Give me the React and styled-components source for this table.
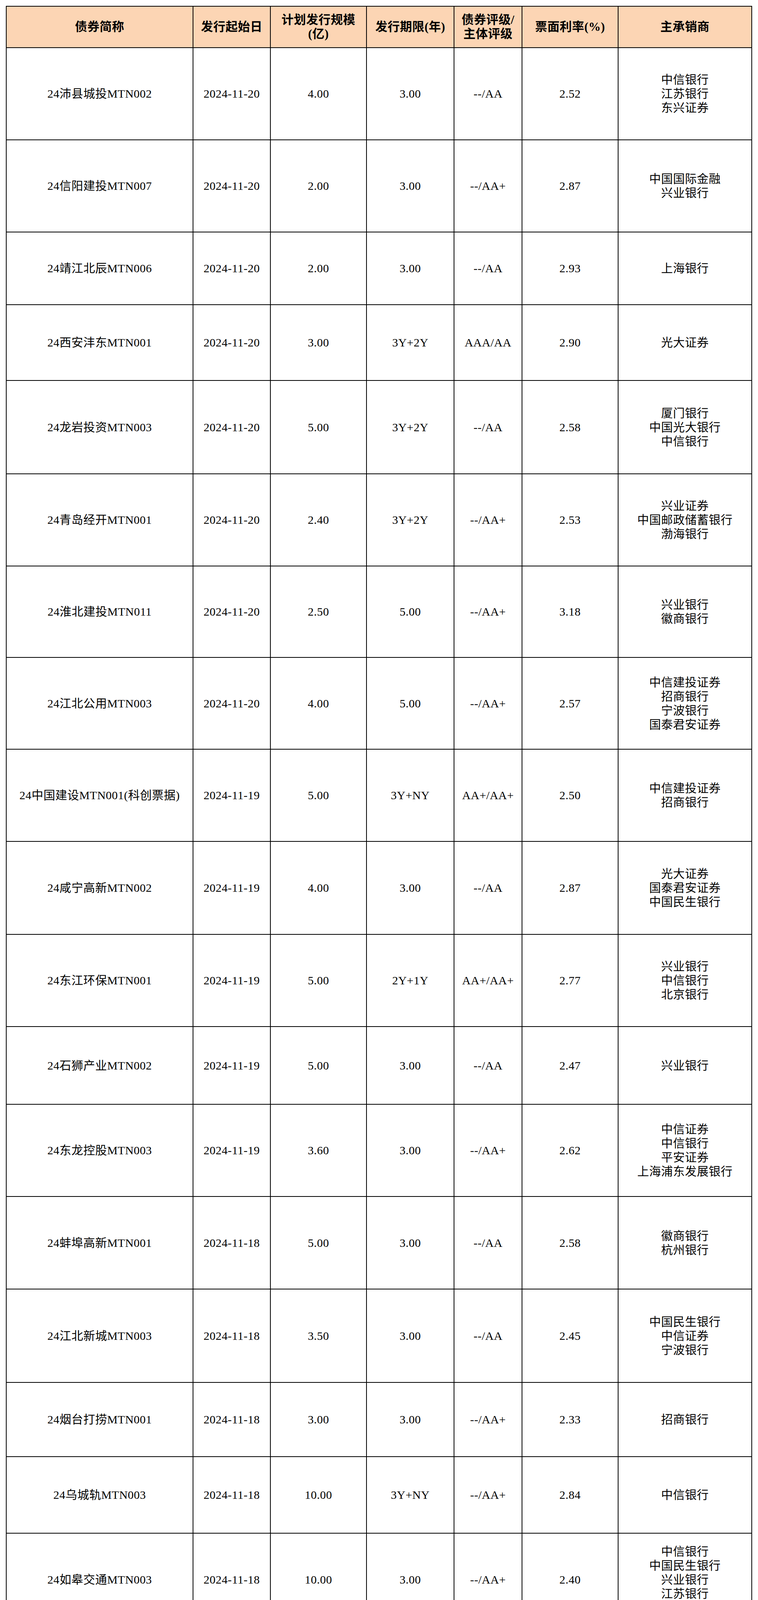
import styled, { createGlobalStyle } from "styled-components";

const GlobalStyle = createGlobalStyle`
  html, body {
    margin: 0;
    padding: 0;
    background: #fff;
  }
  body {
    font-family: "Liberation Serif", "Noto Sans CJK SC", serif;
    color: #000;
  }
`;

// widths of the cells between the 2px rules
const COLS = "476px 196px 244px 222px 172px 244px 340px";

const Page = styled.div`
  padding: 15px 0 0 15px;
`;

const Table = styled.div`
  display: flex;
  flex-direction: column;
  gap: 2px;
  width: fit-content;
  padding: 2px 2px 0 2px;
  background: #000;
`;

const Row = styled.div`
  display: grid;
  grid-template-columns: ${COLS};
  gap: 2px;
  height: ${(p) => p.$h}px;
`;

const Cell = styled.div`
  display: flex;
  flex-direction: column;
  align-items: center;
  justify-content: center;
  text-align: center;
  background: ${(p) => (p.$head ? "#fcd5b4" : "#fff")};
  font-size: ${(p) => (p.$head ? 31 : 30)}px;
  font-weight: ${(p) => (p.$head ? 600 : 400)};
  letter-spacing: 0.5px;
  line-height: 36px;
  white-space: nowrap;
`;

const Line = styled.span`
  display: block;
`;

const head = [
  ["债券简称"],
  ["发行起始日"],
  ["计划发行规模", "(亿)"],
  ["发行期限(年)"],
  ["债券评级/", "主体评级"],
  ["票面利率(%)"],
  ["主承销商"],
];

const rows = [
  { h: 234, name: "24沛县城投MTN002", date: "2024-11-20", size: "4.00", term: "3.00", rate: "--/AA", coupon: "2.52", banks: ["中信银行", "江苏银行", "东兴证券"] },
  { h: 234, name: "24信阳建投MTN007", date: "2024-11-20", size: "2.00", term: "3.00", rate: "--/AA+", coupon: "2.87", banks: ["中国国际金融", "兴业银行"] },
  { h: 184, name: "24靖江北辰MTN006", date: "2024-11-20", size: "2.00", term: "3.00", rate: "--/AA", coupon: "2.93", banks: ["上海银行"] },
  { h: 192, name: "24西安沣东MTN001", date: "2024-11-20", size: "3.00", term: "3Y+2Y", rate: "AAA/AA", coupon: "2.90", banks: ["光大证券"] },
  { h: 237, name: "24龙岩投资MTN003", date: "2024-11-20", size: "5.00", term: "3Y+2Y", rate: "--/AA", coupon: "2.58", banks: ["厦门银行", "中国光大银行", "中信银行"] },
  { h: 234, name: "24青岛经开MTN001", date: "2024-11-20", size: "2.40", term: "3Y+2Y", rate: "--/AA+", coupon: "2.53", banks: ["兴业证券", "中国邮政储蓄银行", "渤海银行"] },
  { h: 232, name: "24淮北建投MTN011", date: "2024-11-20", size: "2.50", term: "5.00", rate: "--/AA+", coupon: "3.18", banks: ["兴业银行", "徽商银行"] },
  { h: 233, name: "24江北公用MTN003", date: "2024-11-20", size: "4.00", term: "5.00", rate: "--/AA+", coupon: "2.57", banks: ["中信建投证券", "招商银行", "宁波银行", "国泰君安证券"] },
  { h: 234, name: "24中国建设MTN001(科创票据)", date: "2024-11-19", size: "5.00", term: "3Y+NY", rate: "AA+/AA+", coupon: "2.50", banks: ["中信建投证券", "招商银行"] },
  { h: 236, name: "24咸宁高新MTN002", date: "2024-11-19", size: "4.00", term: "3.00", rate: "--/AA", coupon: "2.87", banks: ["光大证券", "国泰君安证券", "中国民生银行"] },
  { h: 234, name: "24东江环保MTN001", date: "2024-11-19", size: "5.00", term: "2Y+1Y", rate: "AA+/AA+", coupon: "2.77", banks: ["兴业银行", "中信银行", "北京银行"] },
  { h: 197, name: "24石狮产业MTN002", date: "2024-11-19", size: "5.00", term: "3.00", rate: "--/AA", coupon: "2.47", banks: ["兴业银行"] },
  { h: 234, name: "24东龙控股MTN003", date: "2024-11-19", size: "3.60", term: "3.00", rate: "--/AA+", coupon: "2.62", banks: ["中信证券", "中信银行", "平安证券", "上海浦东发展银行"] },
  { h: 235, name: "24蚌埠高新MTN001", date: "2024-11-18", size: "5.00", term: "3.00", rate: "--/AA", coupon: "2.58", banks: ["徽商银行", "杭州银行"] },
  { h: 237, name: "24江北新城MTN003", date: "2024-11-18", size: "3.50", term: "3.00", rate: "--/AA", coupon: "2.45", banks: ["中国民生银行", "中信证券", "宁波银行"] },
  { h: 188, name: "24烟台打捞MTN001", date: "2024-11-18", size: "3.00", term: "3.00", rate: "--/AA+", coupon: "2.33", banks: ["招商银行"] },
  { h: 194, name: "24乌城轨MTN003", date: "2024-11-18", size: "10.00", term: "3Y+NY", rate: "--/AA+", coupon: "2.84", banks: ["中信银行"] },
  { h: 235, name: "24如皋交通MTN003", date: "2024-11-18", size: "10.00", term: "3.00", rate: "--/AA+", coupon: "2.40", banks: ["中信银行", "中国民生银行", "兴业银行", "江苏银行", "上海银行"] },
  { h: 396, name: "24嵊州投资MTN001", date: "2024-11-18", size: "17.40", term: "3Y+2Y", rate: "--/AA+", coupon: "2.20", banks: ["国泰君安证券", "国信证券", "中信银行", "兴业银行", "杭州银行", "江苏银行", "南京银行", "徽商银行", "宁波银行", "中国建设银行"] },
  { h: 233, name: "24荆门城投MTN003", date: "2024-11-18", size: "5.00", term: "3Y+2Y", rate: "--/AA", coupon: "2.58", banks: ["华泰证券", "汉口银行"] },
];

export default function App() {
  return (
    <Page>
      <GlobalStyle />
      <Table>
        <Row $h={104}>
          {head.map((lines, i) => (
            <Cell $head key={i}>
              {lines.map((t) => (
                <Line key={t}>{t}</Line>
              ))}
            </Cell>
          ))}
        </Row>
        {rows.map((r) => (
          <Row $h={r.h} key={r.name}>
            <Cell>{r.name}</Cell>
            <Cell>{r.date}</Cell>
            <Cell>{r.size}</Cell>
            <Cell>{r.term}</Cell>
            <Cell>{r.rate}</Cell>
            <Cell>{r.coupon}</Cell>
            <Cell>
              {r.banks.map((b) => (
                <Line key={b}>{b}</Line>
              ))}
            </Cell>
          </Row>
        ))}
      </Table>
    </Page>
  );
}
